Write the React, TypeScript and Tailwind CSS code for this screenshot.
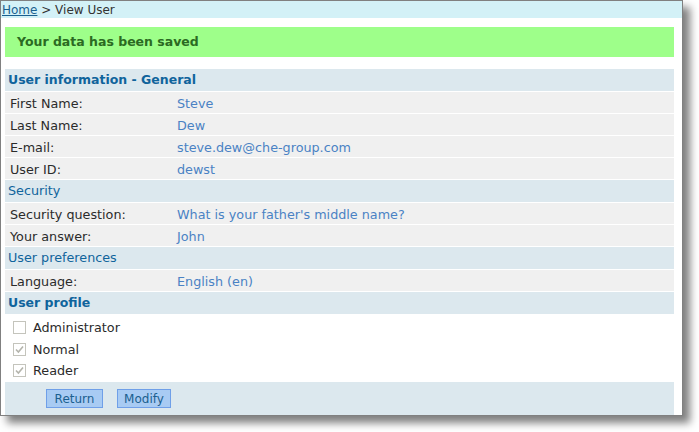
import React from "react";

type Row = { label: string; value: string };

const general: Row[] = [
  { label: "First Name:", value: "Steve" },
  { label: "Last Name:", value: "Dew" },
  { label: "E-mail:", value: "steve.dew@che-group.com" },
  { label: "User ID:", value: "dewst" },
];

const security: Row[] = [
  { label: "Security question:", value: "What is your father's middle name?" },
  { label: "Your answer:", value: "John" },
];

const prefs: Row[] = [{ label: "Language:", value: "English (en)" }];

const profiles = [
  { name: "Administrator", checked: false },
  { name: "Normal", checked: true },
  { name: "Reader", checked: true },
];

function SectionHeader({ title, bold }: { title: string; bold?: boolean }) {
  return (
    <div
      className={
        "h-[22px] mb-px bg-[#dce8ee] pl-[3px] flex items-center text-[#10649c] " +
        (bold ? "font-bold text-[12.5px]" : "text-[12.75px]")
      }
    >
      {title}
    </div>
  );
}

function DataRow({ row }: { row: Row }) {
  return (
    <div className="h-[21px] mb-px bg-[#f0f0f0] pl-[5px] pt-[2px] flex items-center text-[12.75px]">
      <span className="w-[167px] shrink-0 text-[#2b2b2b]">{row.label}</span>
      <span className="text-[#4a82c4]">{row.value}</span>
    </div>
  );
}

function Checkbox({ checked }: { checked: boolean }) {
  return (
    <span className="w-[13px] h-[13px] border border-[#c4c4bc] bg-white flex items-center justify-center">
      {checked && (
        <svg width="9" height="9" viewBox="0 0 9 9">
          <path d="M1 4.5 L3.4 7 L8 1.5" fill="none" stroke="#b4b4ac" strokeWidth="1.6" />
        </svg>
      )}
    </span>
  );
}

export default function App() {
  return (
    <div className="w-[699px] h-[432px] bg-white" style={{ fontFamily: '"DejaVu Sans", Verdana, sans-serif' }}>
      <div className="w-[683px] h-[416px] border border-[#808080] bg-white flex flex-col shadow-[7px_7px_8px_rgba(0,0,0,0.5)]">
        <div className="h-[17px] bg-[#d3f1f7] pl-[1px] flex items-center text-[12px] text-[#333]">
          <a href="#" className="text-[#1a5f8f] underline">Home</a>
          <span>&nbsp;&gt; View User</span>
        </div>

        <div className="flex-1 flex flex-col pl-[4px] pr-[8px]">
          <div className="mt-[9px] h-[30px] bg-[#9eff8a] pl-[12px] flex items-center font-bold text-[12.5px] text-[#2b6a22]">
            Your data has been saved
          </div>

          <div className="mt-[12px]">
            <SectionHeader title="User information - General" bold />
            {general.map((r) => (
              <DataRow key={r.label} row={r} />
            ))}
            <SectionHeader title="Security" />
            {security.map((r) => (
              <DataRow key={r.label} row={r} />
            ))}
            <SectionHeader title="User preferences" />
            {prefs.map((r) => (
              <DataRow key={r.label} row={r} />
            ))}
            <SectionHeader title="User profile" bold />
          </div>

          <div className="flex flex-col pl-[8px] pt-[2px]">
            {profiles.map((p) => (
              <div key={p.name} className="h-[21.5px] flex items-center gap-[7px] text-[12.75px] text-[#2b2b2b]">
                <Checkbox checked={p.checked} />
                <span>{p.name}</span>
              </div>
            ))}
          </div>

          <div className="mt-auto h-[33px] bg-[#dce8ee] flex items-start pt-[7px] pl-[41px] gap-[14px]">
            <button className="w-[57px] h-[19px] bg-[#a8cbf3] border border-[#6f9fe8] text-[12px] text-[#1a5f8f] flex items-center justify-center">
              Return
            </button>
            <button className="w-[54px] h-[19px] bg-[#a8cbf3] border border-[#6f9fe8] text-[12px] text-[#1a5f8f] flex items-center justify-center">
              Modify
            </button>
          </div>
        </div>
      </div>
    </div>
  );
}
